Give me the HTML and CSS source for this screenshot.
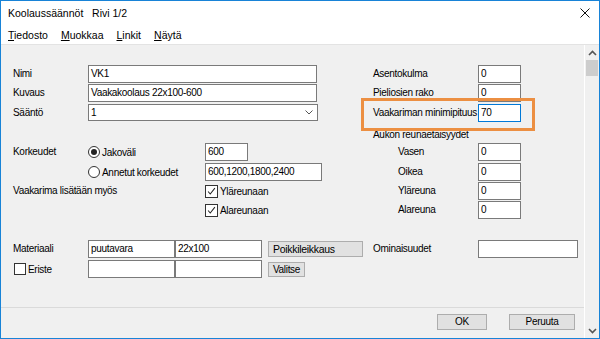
FILE: index.html
```html
<!DOCTYPE html>
<html lang="fi">
<head>
  <meta charset="utf-8">
  <title>Koolaussäännöt</title>
  <link rel="stylesheet" href="styles.css">
</head>
<body>
  <div class="window">
    <div class="titlebar">
      <span class="title">Koolaussäännöt   Rivi 1/2</span>
      <svg class="close" width="10" height="10" viewBox="0 0 10 10">
        <path d="M0.5 0.5 L9.5 9.5 M9.5 0.5 L0.5 9.5" stroke="#111" stroke-width="1" fill="none"/>
      </svg>
    </div>
    <div class="menubar">
      <span><u>T</u>iedosto</span>
      <span><u>M</u>uokkaa</span>
      <span><u>L</u>inkit</span>
      <span><u>N</u>äytä</span>
    </div>

    <div class="client">
      <div class="content">
        <div class="form">
          <!-- ylempi osa -->
          <div class="grid">
            <span class="lbl">Nimi</span>
            <div class="field w-long">VK1</div>
            <span class="lbl">Asentokulma</span>
            <div class="field w-short">0</div>

            <span class="lbl">Kuvaus</span>
            <div class="field w-long">Vaakakoolaus 22x100-600</div>
            <span class="lbl">Pieliosien rako</span>
            <div class="field w-short">0</div>

            <span class="lbl">Sääntö</span>
            <div class="field select">
              <span>1</span>
              <svg width="8" height="5" viewBox="0 0 8 5"><path d="M0.5 0.5 L4 4 L7.5 0.5" stroke="#555" stroke-width="1" fill="none"/></svg>
            </div>
            <div class="hl">
              <span class="lbl rl">Vaakariman minimipituus</span>
              <div class="field w-short focus">70</div>
            </div>

            <span></span>
            <span></span>
            <span class="lbl span2">Aukon reunaetäisyydet</span>

            <span class="lbl">Korkeudet</span>
            <div class="row">
              <span class="radio"><span class="dot on"></span>Jakoväli</span>
              <div class="field w-num">600</div>
            </div>
            <span class="lbl sub">Vasen</span>
            <div class="field w-short">0</div>

            <span></span>
            <div class="row">
              <span class="radio"><span class="dot"></span>Annetut korkeudet</span>
              <div class="field w-mid">600,1200,1800,2400</div>
            </div>
            <span class="lbl sub">Oikea</span>
            <div class="field w-short">0</div>

            <span class="lbl">Vaakarima lisätään myös</span>
            <div class="row indent">
              <span class="check">
                <svg class="box" width="13" height="13" viewBox="0 0 13 13"><path d="M2.5 6.5 L5 9.5 L10.5 2.5" stroke="#222" stroke-width="1.2" fill="none"/></svg>Yläreunaan
              </span>
            </div>
            <span class="lbl sub">Yläreuna</span>
            <div class="field w-short">0</div>

            <span></span>
            <div class="row indent">
              <span class="check">
                <svg class="box" width="13" height="13" viewBox="0 0 13 13"><path d="M2.5 6.5 L5 9.5 L10.5 2.5" stroke="#222" stroke-width="1.2" fill="none"/></svg>Alareunaan
              </span>
            </div>
            <span class="lbl sub">Alareuna</span>
            <div class="field w-short">0</div>
          </div>

          <!-- alempi osa -->
          <div class="grid lower">
            <span class="lbl">Materiaali</span>
            <div class="row">
              <div class="field w-mat">puutavara</div>
              <div class="field w-mat">22x100</div>
              <span class="btn w-poikki">Poikkileikkaus</span>
            </div>
            <span class="lbl">Ominaisuudet</span>
            <div class="field w-omin"></div>

            <span class="check eriste"><span class="box empty"></span>Eriste</span>
            <div class="row">
              <div class="field w-mat"></div>
              <div class="field w-mat"></div>
              <span class="btn w-valitse">Valitse</span>
            </div>
            <span></span>
            <span></span>
          </div>
        </div>

        <div class="footer">
          <span class="btn w-ok">OK</span>
          <span class="btn w-cancel">Peruuta</span>
        </div>
      </div>

      <div class="scrollbar">
        <svg class="arrow" width="9" height="6" viewBox="0 0 9 6"><path d="M1 5 L4.5 1.5 L8 5" stroke="#555" stroke-width="1.6" fill="none"/></svg>
        <div class="thumb"></div>
        <div class="track"></div>
        <svg class="arrow" width="9" height="6" viewBox="0 0 9 6"><path d="M1 1 L4.5 4.5 L8 1" stroke="#555" stroke-width="1.6" fill="none"/></svg>
      </div>
    </div>
  </div>
</body>
</html>
```

FILE: styles.css
```css
* {
  box-sizing: border-box;
}
body {
  margin: 0;
  font-family: "Liberation Sans", Arial, sans-serif;
  font-size: 10px;
  color: #000;
}
.window {
  width: 600px;
  height: 339px;
  border: 1px solid #1883d7;
  display: flex;
  flex-direction: column;
  background: #fff;
}

/* otsikko ja valikko */
.titlebar {
  height: 24px;
  display: flex;
  align-items: center;
  padding-left: 7px;
}
.title {
  flex: 1;
  font-size: 10.5px;
  white-space: pre;
}
.close {
  margin-right: 9px;
}
.menubar {
  height: 20px;
  display: flex;
  align-items: center;
  gap: 13px;
  padding-left: 7px;
  font-size: 10.5px;
  border-bottom: 1px solid #e3e3e3;
}

.client {
  flex: 1;
  display: flex;
  background: #f0f0f0;
}
.content {
  flex: 1;
  display: flex;
  flex-direction: column;
  letter-spacing: -0.3px;
}
.form {
  height: 262px;
  padding: 20px 0 0 12px;
}
.grid {
  display: grid;
  grid-template-columns: 75px 285px 105px 1fr;
  grid-template-rows: 19px 20px 20px 19px 20px 19px 19px 20px;
  align-items: start;
}
.grid.lower {
  grid-template-rows: 20px 20px;
  margin-top: 19px;
}
.lbl {
  line-height: 18px;
  white-space: nowrap;
}
.lbl.sub {
  padding-left: 25px;
}
.span2 {
  grid-column: span 2;
  line-height: 14px;
  padding-top: 4px;
}
.row {
  display: flex;
  align-items: center;
  height: 18px;
}
.row.indent {
  padding-left: 117px;
}

/* kentät */
.field {
  height: 18px;
  background: #fff;
  border: 1px solid #7a7a7a;
  padding: 0 2px;
  line-height: 16px;
  white-space: nowrap;
  overflow: hidden;
}
.field.focus {
  border-color: #0078d7;
}
.w-long { width: 229px; }
.w-short { width: 43px; }
.w-num { width: 43px; }
.w-mid { width: 117px; }
.w-mat { width: 87px; }
.w-omin { width: 100px; }
.select {
  width: 230px;
  height: 17px;
  line-height: 15px;
  display: flex;
  align-items: center;
  justify-content: space-between;
  padding-right: 4px;
}

/* korostus */
.hl {
  grid-column: span 2;
  display: flex;
  position: relative;
}
.hl .rl {
  width: 105px;
}
.hl::before {
  content: "";
  position: absolute;
  left: -12px;
  top: -6px;
  width: 168px;
  height: 27px;
  border: 3px solid #ec8f42;
}

/* valinnat */
.radio {
  display: flex;
  align-items: center;
  gap: 2px;
  width: 117px;
}
.dot {
  width: 12px;
  height: 12px;
  border: 1px solid #333;
  border-radius: 50%;
  background: #fff;
  display: flex;
  align-items: center;
  justify-content: center;
}
.dot.on::after {
  content: "";
  width: 6px;
  height: 6px;
  border-radius: 50%;
  background: #222;
}
.check {
  display: flex;
  align-items: center;
  gap: 2px;
}
.box {
  width: 13px;
  height: 13px;
  border: 1px solid #333;
  background: #fff;
}
.box.empty {
  width: 12px;
  height: 12px;
}
.eriste {
  height: 18px;
  margin-left: 1px;
}

/* painikkeet */
.btn {
  height: 16px;
  background: #e1e1e1;
  border: 1px solid #adadad;
  line-height: 14px;
  text-align: center;
}
.w-poikki {
  width: 95px;
  margin-left: 6px;
  text-align: left;
  padding-left: 4px;
  font-size: 10.5px;
}
.w-valitse {
  width: 37px;
  height: 15px;
  line-height: 13px;
  margin-left: 6px;
}
.footer {
  flex: 1;
  border-top: 1px solid #dadada;
  display: flex;
  justify-content: flex-end;
  align-items: flex-start;
  gap: 22px;
  padding: 6px 9px 0 0;
}
.w-ok { width: 50px; }
.w-cancel { width: 66px; }

/* vierityspalkki */
.scrollbar {
  width: 15px;
  border-left: 1px solid #fff;
  display: flex;
  flex-direction: column;
  align-items: center;
}
.arrow {
  margin: 5px 0 4px;
}
.thumb {
  width: 12px;
  height: 16px;
  background: #cdcdcd;
}
.track {
  flex: 1;
}
```
